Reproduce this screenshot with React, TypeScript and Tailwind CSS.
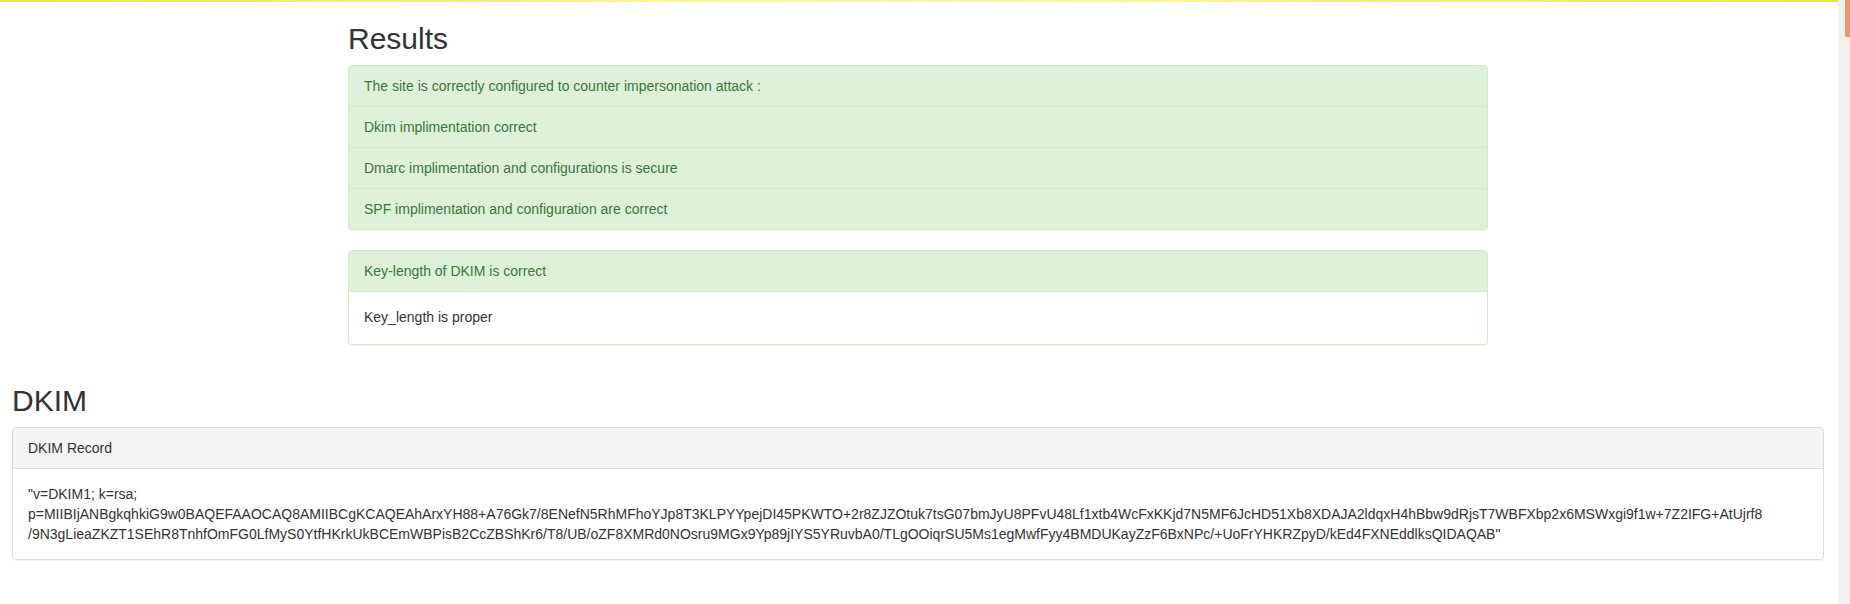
const dkimRecord =
  '"v=DKIM1; k=rsa; p=MIIBIjANBgkqhkiG9w0BAQEFAAOCAQ8AMIIBCgKCAQEAhArxYH88+A76Gk7/8ENefN5RhMFhoYJp8T3KLPYYpejDI45PKWTO+2r8ZJZOtuk7tsG07bmJyU8PFvU48Lf1xtb4WcFxKKjd7N5MF6JcHD51Xb8XDAJA2ldqxH4hBbw9dRjsT7WBFXbp2x6MSWxgi9f1w+7Z2IFG+AtUjrf8 /9N3gLieaZKZT1SEhR8TnhfOmFG0LfMyS0YtfHKrkUkBCEmWBPisB2CcZBShKr6/T8/UB/oZF8XMRd0NOsru9MGx9Yp89jIYS5YRuvbA0/TLgOOiqrSU5Ms1egMwfFyy4BMDUKayZzF6BxNPc/+UoFrYHKRZpyD/kEd4FXNEddlksQIDAQAB"';

const checks = [
  'Dkim implimentation correct',
  'Dmarc implimentation and configurations is secure',
  'SPF implimentation and configuration are correct',
];

export default function App() {
  return (
    <div className="flex min-h-[604px] bg-white text-[14px] leading-[20px] text-[#333333] font-['Liberation_Sans',Arial,sans-serif]">
      <div className="flex-1 min-w-0">
        {/* top progress line */}
        <div className="h-[2px] bg-gradient-to-r from-[#e7eb35] via-[#fbfb9e] to-[#e7eb35]" />

        <div className="w-[1170px] mx-auto pl-[14px] pr-[16px]">
          <h2 className="mt-[20px] mb-[10px] text-[30px] leading-[33px] font-medium">Results</h2>

          <div className="mb-[20px] rounded-[4px] border border-[#d6e9c6] shadow-[0_1px_1px_rgba(0,0,0,0.05)] overflow-hidden bg-[#dff0d8] text-[#3c763d]">
            <div className="px-[15px] py-[10px] border-b border-[#d6e9c6]">
              The site is correctly configured to counter impersonation attack :
            </div>
            {checks.map((c, i) => (
              <div
                key={c}
                className={`px-[15px] py-[10px] ${i < checks.length - 1 ? 'border-b border-[#d6e9c6]' : ''}`}
              >
                {c}
              </div>
            ))}
          </div>

          <div className="mb-[20px] rounded-[4px] border border-[#d6e9c6] shadow-[0_1px_1px_rgba(0,0,0,0.05)] overflow-hidden bg-white">
            <div className="px-[15px] py-[10px] border-b border-[#d6e9c6] bg-[#dff0d8] text-[#3c763d]">
              Key-length of DKIM is correct
            </div>
            <div className="px-[15px] pt-[15px] pb-[17px]">Key_length is proper</div>
          </div>
        </div>

        <div className="pl-[12px] pr-[14px]">
          <h2 className="mt-[39px] mb-[10px] text-[30px] leading-[33px] font-medium">DKIM</h2>
          <div className="mb-[20px] rounded-[4px] border border-[#dddddd] shadow-[0_1px_1px_rgba(0,0,0,0.05)] overflow-hidden bg-white">
            <div className="px-[15px] py-[10px] border-b border-[#dddddd] bg-[#f5f5f5]">DKIM Record</div>
            <div className="p-[15px] break-words">{dkimRecord}</div>
          </div>
        </div>
      </div>

      {/* page scrollbar */}
      <div className="w-[12px] shrink-0 bg-[#f1f0ef] flex justify-end">
        <div className="w-[5px] h-[37px] bg-[#f2956a]" />
      </div>
    </div>
  );
}
